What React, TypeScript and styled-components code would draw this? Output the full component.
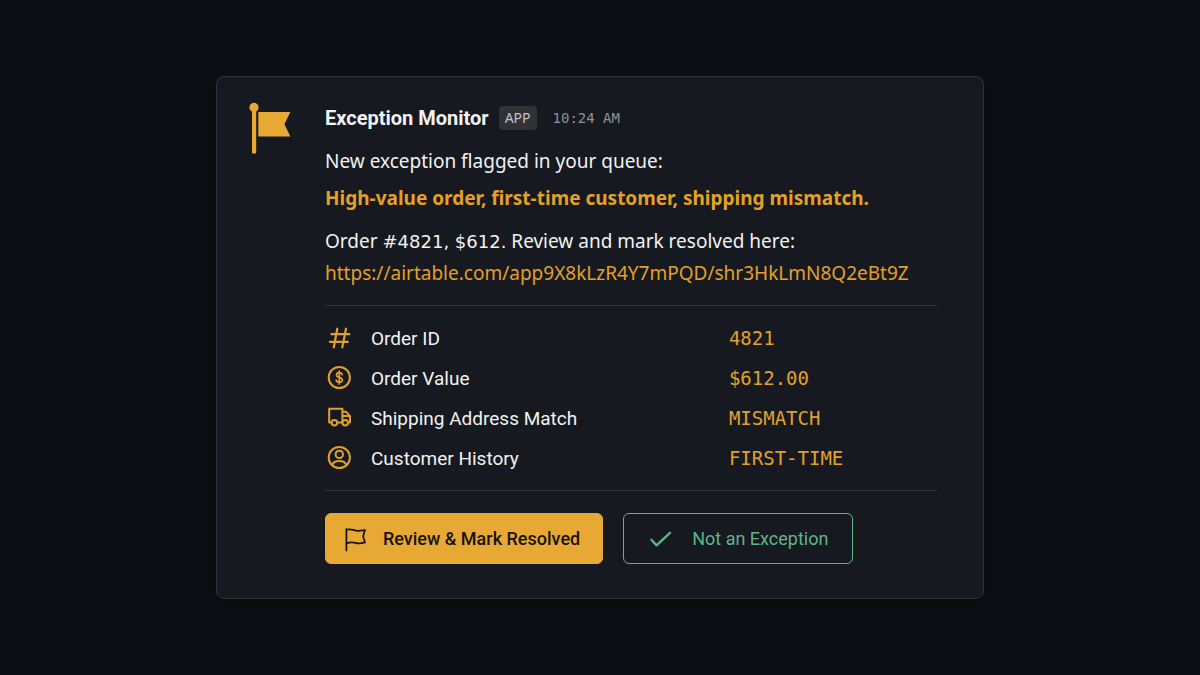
import React from "react";
import styled, { createGlobalStyle, css } from "styled-components";

const colors = {
  page: "#0b0f13",
  card: "#16191f",
  border: "#303338",
  text: "#f1f2f3",
  muted: "#8f9195",
  amber: "#e7a834",
  amberText: "#e3a02a",
  green: "#5fb58a",
  ink: "#17130a",
};

const GlobalStyle = createGlobalStyle`
  *, *::before, *::after { box-sizing: border-box; }
  body {
    margin: 0;
    background: ${colors.page};
    color: ${colors.text};
    font-family: "Noto Sans", "Open Sans", sans-serif;
  }
`;

const Page = styled.main`
  display: flex;
  align-items: center;
  justify-content: center;
  min-height: 100vh;
  padding: 24px;
`;

const Card = styled.article`
  display: flex;
  gap: 34px;
  width: 100%;
  max-width: 768px;
  padding: 25px 46px 34px 32px;
  background: ${colors.card};
  border: 1px solid ${colors.border};
  border-radius: 8px;
  box-shadow: 0 2px 10px rgba(0, 0, 0, 0.3);
`;

const FlagLogo = styled.svg`
  flex: none;
  width: 42px;
  height: 52px;
`;

const Content = styled.div`
  flex: 1;
  min-width: 0;
`;

const Header = styled.header`
  display: flex;
  align-items: center;
  height: 32px;
`;

const Sender = styled.h1`
  margin: 0;
  font-family: Roboto, sans-serif;
  font-size: 20px;
  font-weight: 700;
  line-height: 28px;
`;

const Badge = styled.span`
  margin-left: 10px;
  padding: 0 6px;
  border-radius: 4px;
  background: #303236;
  color: #c3c4c6;
  font-size: 14px;
  line-height: 24px;
`;

const Time = styled.time`
  margin-left: 16px;
  color: ${colors.muted};
  font-family: "DejaVu Sans Mono", monospace;
  font-size: 14px;
`;

const Line = styled.p<{ $gap: number }>`
  margin: ${({ $gap }) => $gap}px 0 0;
  font-size: 19px;
  line-height: 28px;
`;

const Highlight = styled.strong`
  color: ${colors.amberText};
  font-weight: 700;
`;

const Figures = styled.span`
  font-family: "DejaVu Sans", sans-serif;
  font-size: 18px;
  line-height: 1;
`;

const RecordLink = styled.a`
  color: ${colors.amberText};
  text-decoration: none;
  overflow-wrap: anywhere;
`;

const Details = styled.table`
  width: 100%;
  margin: 18px 0 22px;
  border-collapse: separate;
  border-spacing: 0;
  border-top: 1px solid ${colors.border};
  border-bottom: 1px solid ${colors.border};
  padding: 12px 0;
`;

const Label = styled.th`
  width: 66%;
  height: 40px;
  padding: 0;
  font-family: Roboto, sans-serif;
  font-size: 19px;
  font-weight: 400;
  text-align: left;
`;

const LabelInner = styled.span`
  display: flex;
  align-items: center;
  gap: 18px;
`;

const Value = styled.td`
  padding: 0;
  color: ${colors.amberText};
  font-family: "DejaVu Sans Mono", monospace;
  font-size: 19px;
`;

const Icon = styled.svg`
  flex: none;
  width: 28px;
  height: 28px;
  fill: none;
  stroke: ${colors.amberText};
  stroke-width: 2;
  stroke-linecap: round;
  stroke-linejoin: round;
`;

const Actions = styled.div`
  display: flex;
  flex-wrap: wrap;
  gap: 20px;
`;

const Button = styled.button<{ $primary?: boolean }>`
  display: flex;
  align-items: center;
  height: 51px;
  border-radius: 6px;
  font-family: Roboto, sans-serif;
  font-size: 18px;
  cursor: pointer;

  ${Icon} {
    stroke: currentColor;
  }

  ${({ $primary }) =>
    $primary
      ? css`
          gap: 14px;
          padding: 0 22px 0 15px;
          border: 1px solid ${colors.amber};
          background: ${colors.amber};
          color: ${colors.ink};
          font-weight: 500;
        `
      : css`
          gap: 17px;
          padding: 0 24px 0 23px;
          border: 1px solid ${colors.green};
          background: transparent;
          color: ${colors.green};
          font-weight: 400;
        `}
`;

const HashIcon = () => (
  <Icon viewBox="0 0 28 28" aria-hidden="true">
    <path
      strokeWidth="2.2"
      d="M12.3 4.6 8.8 23.4M21 4.6 17.3 23.4M6.4 10.1H24.4M4.9 17.8H22.8"
    />
  </Icon>
);

const DollarIcon = () => (
  <Icon viewBox="0 0 28 28" aria-hidden="true">
    <circle cx="14.3" cy="13.5" r="10.6" />
    <path
      strokeWidth="1.7"
      d="M17.2 10.7C16.9 9.4 15.8 8.7 14.3 8.7C12.7 8.7 11.5 9.5 11.5 10.9C11.5 14.1 17.4 12.7 17.4 16.1C17.4 17.5 16 18.3 14.4 18.3C12.7 18.3 11.5 17.5 11.2 16.2M14.3 7.1V19.9"
    />
  </Icon>
);

const TruckIcon = () => (
  <Icon viewBox="0 0 28 28" aria-hidden="true">
    <path d="M6.4 18.6H4.2V4.7H17.4V18.6H12.4M17.4 7.7H21L25 12.1V18.6H23.2M17.4 12.1H25" />
    <circle cx="9.4" cy="18.7" r="2.8" />
    <circle cx="20.2" cy="18.7" r="2.8" />
  </Icon>
);

const CustomerIcon = () => (
  <Icon viewBox="0 0 28 28" aria-hidden="true">
    <circle cx="14.3" cy="13.5" r="10.6" />
    <circle cx="14.3" cy="10.4" r="3.7" />
    <path d="M7.4 20.9C8.4 18.1 10.8 17.1 14.3 17.1C17.8 17.1 20.2 18.1 21.2 20.9" />
  </Icon>
);

const OutlineFlagIcon = () => (
  <Icon viewBox="0 0 28 28" aria-hidden="true">
    <path
      strokeWidth="1.7"
      d="M5.4 4V25.4M5.4 4.8C9 3.4 12 4.9 15 5.6C18 6.2 21 5.4 24 5L22.1 11.2L24 17.4C20.5 18.4 17.5 18.9 14.5 17.9C11.5 17 8.4 17.2 5.4 18.4"
    />
  </Icon>
);

const CheckIcon = () => (
  <Icon viewBox="0 0 28 28" aria-hidden="true">
    <path strokeWidth="2.3" d="M4.4 14.8 9.6 20.4 23 7.8" />
  </Icon>
);

const details = [
  { icon: <HashIcon />, label: "Order ID", value: "4821" },
  { icon: <DollarIcon />, label: "Order Value", value: "$612.00" },
  { icon: <TruckIcon />, label: "Shipping Address Match", value: "MISMATCH" },
  { icon: <CustomerIcon />, label: "Customer History", value: "FIRST-TIME" },
];

const recordUrl = "https://airtable.com/app9X8kLzR4Y7mPQD/shr3HkLmN8Q2eBt9Z";

export default function App() {
  return (
    <>
      <GlobalStyle />
      <Page>
        <Card>
          <FlagLogo viewBox="0 0 42 52" fill={colors.amber} aria-hidden="true">
            <circle cx="5" cy="5.4" r="4.6" />
            <rect x="3" y="6" width="4.2" height="45.4" rx="1" />
            <path d="M9.3 10H41.4L35.4 22.3L41.4 34.5H9.3Z" />
          </FlagLogo>
          <Content>
            <Header>
              <Sender>Exception Monitor</Sender>
              <Badge>APP</Badge>
              <Time dateTime="10:24">10:24 AM</Time>
            </Header>
            <Line $gap={13}>New exception flagged in your queue:</Line>
            <Line $gap={9}>
              <Highlight>High-value order, first-time customer, shipping mismatch.</Highlight>
            </Line>
            <Line $gap={15}>
              Order <Figures>#4821, $612.</Figures> Review and mark resolved here:
            </Line>
            <Line $gap={4}>
              <RecordLink href={recordUrl}>{recordUrl}</RecordLink>
            </Line>
            <Details>
              <tbody>
                {details.map((row) => (
                  <tr key={row.label}>
                    <Label scope="row">
                      <LabelInner>
                        {row.icon}
                        {row.label}
                      </LabelInner>
                    </Label>
                    <Value>{row.value}</Value>
                  </tr>
                ))}
              </tbody>
            </Details>
            <Actions>
              <Button type="button" $primary>
                <OutlineFlagIcon />
                Review &amp; Mark Resolved
              </Button>
              <Button type="button">
                <CheckIcon />
                Not an Exception
              </Button>
            </Actions>
          </Content>
        </Card>
      </Page>
    </>
  );
}
